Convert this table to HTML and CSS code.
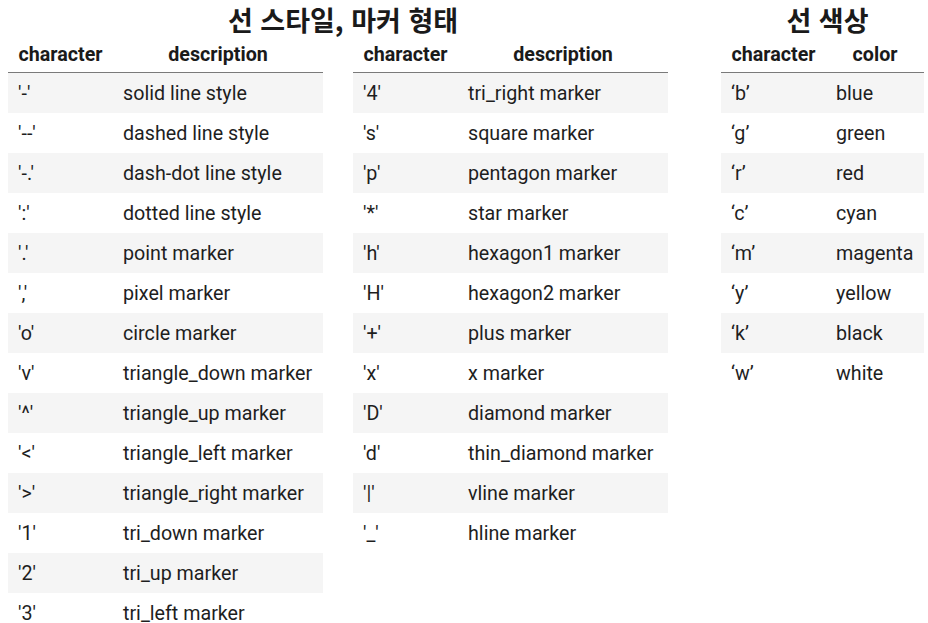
FILE: index.html
```html
<!DOCTYPE html>
<html lang="ko">
<head>
<meta charset="utf-8">
<link rel="stylesheet" href="styles.css">
</head>
<body>
<div class="page">
  <section class="group group-style">
    <h2 class="title">선 스타일, 마커 형태</h2>
    <div class="tables">
      <table class="tbl">
        <thead><tr><th class="key">character</th><th class="wide">description</th></tr></thead>
        <tbody>
          <tr><td>'-'</td><td>solid line style</td></tr>
          <tr><td>'--'</td><td>dashed line style</td></tr>
          <tr><td>'-.'</td><td>dash-dot line style</td></tr>
          <tr><td>':'</td><td>dotted line style</td></tr>
          <tr><td>'.'</td><td>point marker</td></tr>
          <tr><td>','</td><td>pixel marker</td></tr>
          <tr><td>'o'</td><td>circle marker</td></tr>
          <tr><td>'v'</td><td>triangle_down marker</td></tr>
          <tr><td>'^'</td><td>triangle_up marker</td></tr>
          <tr><td>'&lt;'</td><td>triangle_left marker</td></tr>
          <tr><td>'&gt;'</td><td>triangle_right marker</td></tr>
          <tr><td>'1'</td><td>tri_down marker</td></tr>
          <tr><td>'2'</td><td>tri_up marker</td></tr>
          <tr><td>'3'</td><td>tri_left marker</td></tr>
        </tbody>
      </table>
      <table class="tbl">
        <thead><tr><th class="key">character</th><th class="wide">description</th></tr></thead>
        <tbody>
          <tr><td>'4'</td><td>tri_right marker</td></tr>
          <tr><td>'s'</td><td>square marker</td></tr>
          <tr><td>'p'</td><td>pentagon marker</td></tr>
          <tr><td>'*'</td><td>star marker</td></tr>
          <tr><td>'h'</td><td>hexagon1 marker</td></tr>
          <tr><td>'H'</td><td>hexagon2 marker</td></tr>
          <tr><td>'+'</td><td>plus marker</td></tr>
          <tr><td>'x'</td><td>x marker</td></tr>
          <tr><td>'D'</td><td>diamond marker</td></tr>
          <tr><td>'d'</td><td>thin_diamond marker</td></tr>
          <tr><td>'|'</td><td>vline marker</td></tr>
          <tr><td>'_'</td><td>hline marker</td></tr>
        </tbody>
      </table>
    </div>
  </section>
  <section class="group group-color">
    <h2 class="title">선 색상</h2>
    <div class="tables">
      <table class="tbl tbl-color">
        <thead><tr><th class="key">character</th><th class="narrow">color</th></tr></thead>
        <tbody>
          <tr><td>‘b’</td><td>blue</td></tr>
          <tr><td>‘g’</td><td>green</td></tr>
          <tr><td>‘r’</td><td>red</td></tr>
          <tr><td>‘c’</td><td>cyan</td></tr>
          <tr><td>‘m’</td><td>magenta</td></tr>
          <tr><td>‘y’</td><td>yellow</td></tr>
          <tr><td>‘k’</td><td>black</td></tr>
          <tr><td>‘w’</td><td>white</td></tr>
        </tbody>
      </table>
    </div>
  </section>
</div>
</body>
</html>
```

FILE: styles.css
```css
html, body {
  margin: 0;
  padding: 0;
  background: #ffffff;
}

body {
  font-family: Roboto, "Noto Sans CJK KR", sans-serif;
  color: #1e1e1e;
}

.page {
  display: flex;
  align-items: flex-start;
  gap: 53px;
  padding: 0 0 0 8px;
}

.group {
  display: flex;
  flex-direction: column;
  align-items: stretch;
}

.title {
  margin: 0;
  height: 36px;
  line-height: 40px;
  padding-left: 10px;
  font-family: "Noto Sans CJK KR", Roboto, sans-serif;
  font-size: 27px;
  font-weight: 700;
  text-align: center;
  color: #1a1a1a;
}

.tables {
  display: flex;
  align-items: flex-start;
  gap: 30px;
}

.tbl {
  border-collapse: collapse;
  border-spacing: 0;
  font-size: 19.7px;
}

.tbl th {
  height: 36px;
  padding: 0 10px;
  font-weight: 700;
  text-align: center;
  vertical-align: middle;
  border-bottom: 1px solid #7a7a7a;
  color: #1a1a1a;
}

.tbl th.key {
  width: 85px;
}

.tbl th.wide {
  width: 190px;
}

.tbl th.narrow {
  width: 78px;
}

.tbl td {
  height: 40px;
  padding: 0 10px;
  text-align: left;
  vertical-align: middle;
  white-space: nowrap;
}

.tbl tbody tr:nth-child(odd) td {
  background: #f5f5f5;
}
```
